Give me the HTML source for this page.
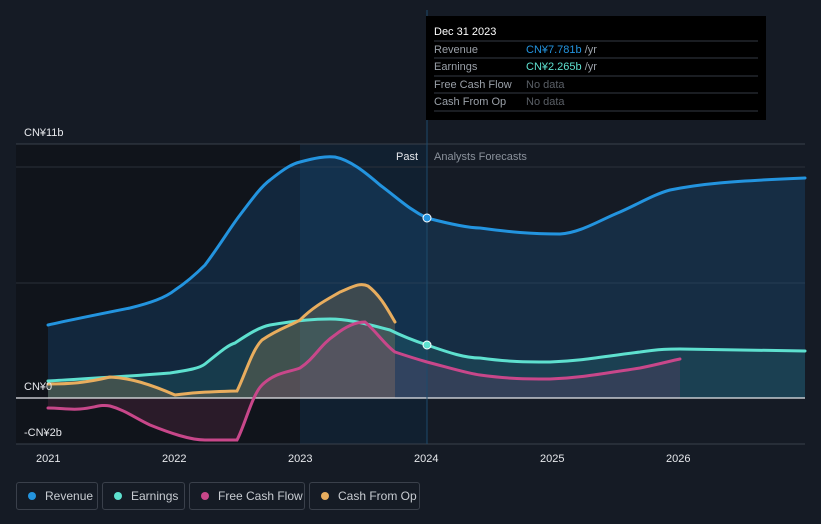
<!DOCTYPE html>
<html><head><meta charset="utf-8"><style>
body{margin:0;background:#151b25;font-family:"Liberation Sans",sans-serif;}
svg{display:block}
.lg{position:absolute;top:482px;height:28px;border:1px solid #3a404b;border-radius:3px;color:#c8ccd2;font-size:12px;line-height:26px;box-sizing:border-box;padding-left:28px;white-space:nowrap}
.lg i{position:absolute;left:11px;top:9px;width:8px;height:8px;border-radius:50%}
</style></head><body>
<div style="position:relative;width:821px;height:524px;overflow:hidden">
<svg width="821" height="524">
<rect x="0" y="0" width="821" height="524" fill="#151b25"/>
<rect x="16" y="144" width="284" height="300" fill="#10141b"/>
<rect x="300" y="144" width="127" height="300" fill="#112030"/>
<line x1="16" y1="144" x2="805" y2="144" stroke="#39404b"/>
<line x1="16" y1="167" x2="805" y2="167" stroke="#2a303a"/>
<line x1="16" y1="283" x2="805" y2="283" stroke="#2a303a"/>
<line x1="16" y1="444" x2="805" y2="444" stroke="#39404b"/>
<path d="M48,325 C70,320 90,316 130,308 C150,303 165,298 175,290 C190,280 200,270 205,265 C220,245 230,228 240,215 C255,195 262,186 270,180 C285,168 292,164 300,162 C315,158 325,156 335,157 C350,160 365,172 380,185 C400,200 410,210 427,218 C450,224 470,228 480,228 C510,232 530,234 560,234 C580,233 600,220 620,212 C640,203 655,194 670,190 C700,184 730,181 805,178 L805,398 L48,398 Z" fill="#1d6fb5" fill-opacity="0.22"/>
<path d="M48,381 C80,379 120,377 170,373 C190,370 200,368 205,364 C220,352 228,345 235,343 C250,333 260,327 270,325 C300,320 315,319 330,319 C345,319 360,322 390,330 C400,335 415,341 427,345 C450,353 465,358 480,358 C510,362 525,362 550,362 C580,361 600,357 640,352 C660,349 670,349 680,349 L805,351 L805,398 L48,398 Z" fill="#3fd0c0" fill-opacity="0.12"/>
<path d="M48,384 C70,384 85,383 110,377 C130,378 150,384 175,395 C190,393 200,392 237,391 C245,375 252,350 262,340 C280,328 290,326 300,320 C315,305 330,298 340,292 C352,287 360,282 368,286 C380,295 388,310 395,322 L395,398 L48,398 Z" fill="#e8a85a" fill-opacity="0.2"/>
<path d="M48,408 C60,408 70,410 80,409 C95,408 100,404 110,406 C125,410 135,418 150,425 C170,433 190,440 205,440 L237,440 C245,425 252,395 262,385 C275,372 290,372 300,368 C315,358 320,345 335,335 C345,327 355,322 365,322 C375,330 385,345 395,352 C410,357 420,360 427,362 C450,368 470,374 480,375 C510,379 525,379 550,379 C580,378 600,374 640,368 C660,364 670,361 680,359 L680,398 L48,398 Z" fill="#c0407f" fill-opacity="0.15"/>
<line x1="16" y1="398" x2="805" y2="398" stroke="#e6e8ec" stroke-width="1.2"/>
<line x1="427" y1="10" x2="427" y2="444" stroke="#1d4a6b" stroke-width="1"/>
<g fill="none" stroke-width="3" stroke-linecap="round">
<path d="M48,325 C70,320 90,316 130,308 C150,303 165,298 175,290 C190,280 200,270 205,265 C220,245 230,228 240,215 C255,195 262,186 270,180 C285,168 292,164 300,162 C315,158 325,156 335,157 C350,160 365,172 380,185 C400,200 410,210 427,218 C450,224 470,228 480,228 C510,232 530,234 560,234 C580,233 600,220 620,212 C640,203 655,194 670,190 C700,184 730,181 805,178" stroke="#2394df"/>
<path d="M48,381 C80,379 120,377 170,373 C190,370 200,368 205,364 C220,352 228,345 235,343 C250,333 260,327 270,325 C300,320 315,319 330,319 C345,319 360,322 390,330 C400,335 415,341 427,345 C450,353 465,358 480,358 C510,362 525,362 550,362 C580,361 600,357 640,352 C660,349 670,349 680,349 L805,351" stroke="#5ee0cf"/>
<path d="M48,408 C60,408 70,410 80,409 C95,408 100,404 110,406 C125,410 135,418 150,425 C170,433 190,440 205,440 L237,440 C245,425 252,395 262,385 C275,372 290,372 300,368 C315,358 320,345 335,335 C345,327 355,322 365,322 C375,330 385,345 395,352 C410,357 420,360 427,362 C450,368 470,374 480,375 C510,379 525,379 550,379 C580,378 600,374 640,368 C660,364 670,361 680,359" stroke="#c8478a"/>
<path d="M48,384 C70,384 85,383 110,377 C130,378 150,384 175,395 C190,393 200,392 237,391 C245,375 252,350 262,340 C280,328 290,326 300,320 C315,305 330,298 340,292 C352,287 360,282 368,286 C380,295 388,310 395,322" stroke="#e8ad5e"/>
</g>
<circle cx="427" cy="218" r="4" fill="#2394df" stroke="#fff" stroke-width="1"/>
<circle cx="427" cy="345" r="4" fill="#5ee0cf" stroke="#fff" stroke-width="1"/>
<g font-size="11" fill="#e6e8ec">
<text x="24" y="136">CN¥11b</text>
<text x="24" y="390">CN¥0</text>
<text x="24" y="436">-CN¥2b</text>
<text x="36" y="462">2021</text><text x="162" y="462">2022</text><text x="288" y="462">2023</text><text x="414" y="462">2024</text><text x="540" y="462">2025</text><text x="666" y="462">2026</text>
<text x="418" y="160" text-anchor="end">Past</text>
<text x="434" y="160" fill="#8b929c">Analysts Forecasts</text>
</g>
<rect x="426" y="16" width="340" height="104" fill="#000"/>
<g font-size="11">
<text x="434" y="35" fill="#fff">Dec 31 2023</text>
<g stroke="#333a44"><line x1="434" y1="41" x2="758" y2="41"/><line x1="434" y1="58" x2="758" y2="58"/><line x1="434" y1="76" x2="758" y2="76"/><line x1="434" y1="93" x2="758" y2="93"/><line x1="434" y1="111" x2="758" y2="111"/></g>
<text x="434" y="53" fill="#9aa0a8">Revenue</text><text x="526" y="53" fill="#2394df">CN¥7.781b <tspan fill="#9aa0a8">/yr</tspan></text>
<text x="434" y="70" fill="#9aa0a8">Earnings</text><text x="526" y="70" fill="#5ee0cf">CN¥2.265b <tspan fill="#9aa0a8">/yr</tspan></text>
<text x="434" y="88" fill="#9aa0a8">Free Cash Flow</text><text x="526" y="88" fill="#5a5f66">No data</text>
<text x="434" y="105" fill="#9aa0a8">Cash From Op</text><text x="526" y="105" fill="#5a5f66">No data</text>
</g>
</svg>
<div class="lg" style="left:16px;width:82px"><i style="background:#2394df"></i>Revenue</div>
<div class="lg" style="left:102px;width:83px"><i style="background:#5ee0cf"></i>Earnings</div>
<div class="lg" style="left:189px;width:116px"><i style="background:#c8478a"></i>Free Cash Flow</div>
<div class="lg" style="left:309px;width:111px"><i style="background:#e8ad5e"></i>Cash From Op</div>
</div>
</body></html>
